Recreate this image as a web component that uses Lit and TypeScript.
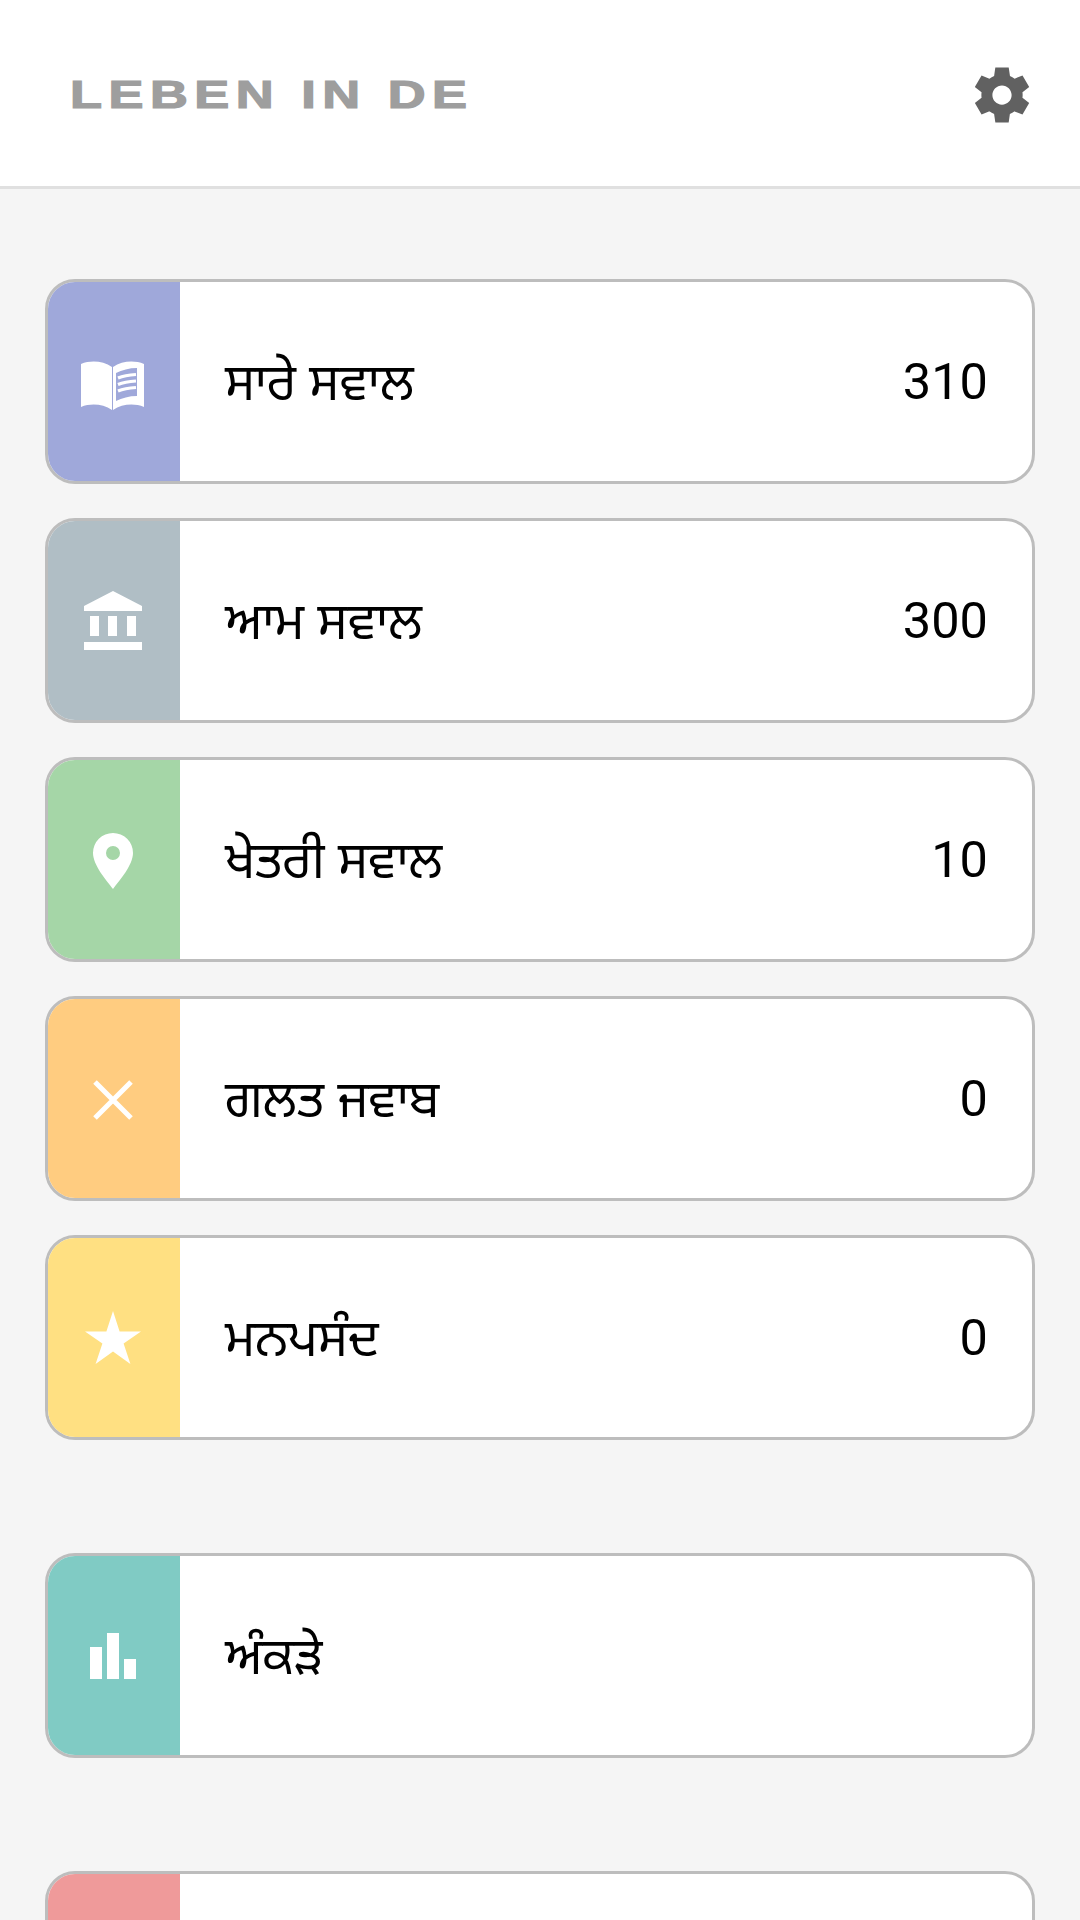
import { LitElement, html, css, svg } from "lit";
import { customElement } from "lit/decorators.js";

const W = "#fff";
const icons = {
  book: svg`<path fill="${W}" d="M3 18C13 14 25 15 34 21V64C25 58 13 57 3 61Z"/><path fill="${W}" fill-rule="evenodd" d="M35 21C44 15 56 14 66 18V61C56 57 44 58 35 64ZM38 27V55C44 52 51 50 59 50V22C51 22 44 24 38 27Z"/><path fill="none" stroke="${W}" stroke-width="3.2" d="M40 32C45 30 51 29 58 28.500M40 38.500C45 36.500 51 35.500 58 35M40 45C45 43 51 42 58 41.500"/>`,
  bank: svg`<path fill="${W}" d="M35 6L64 21V26H6V21ZM12 31H21V51H12ZM30 31H39V51H30ZM49 31H58V51H49ZM6 57H64V65H6Z"/>`,
  pin: svg`<path fill="${W}" fill-rule="evenodd" d="M35 9A20 20 0 0 1 55 29C55 41 42 56 35 65C28 56 15 41 15 29A20 20 0 0 1 35 9ZM35 22A7 7 0 1 0 35 36A7 7 0 1 0 35 22Z"/>`,
  x: svg`<path fill="none" stroke="${W}" stroke-width="5" d="M17 19L53 55M53 19L17 55"/>`,
  star: svg`<path fill="${W}" d="M35 9L41.6 29.500H63L45.600 41.600L52.400 62L35 49.600L17.600 62L24.400 41.600L7 29.500H28.400Z"/>`,
  bars: svg`<path fill="${W}" d="M12 27H24V59H12ZM29 13H41V59H29ZM46 39H58V59H46Z"/>`,
};

type Row = { key: keyof typeof icons | null; color: string; label: string; count?: string };

const main: Row[] = [
  { key: "book", color: "#9fa8da", label: "ਸਾਰੇ ਸਵਾਲ", count: "310" },
  { key: "bank", color: "#b0bec5", label: "ਆਮ ਸਵਾਲ", count: "300" },
  { key: "pin", color: "#a5d6a7", label: "ਖੇਤਰੀ ਸਵਾਲ", count: "10" },
  { key: "x", color: "#ffcc80", label: "ਗਲਤ ਜਵਾਬ", count: "0" },
  { key: "star", color: "#ffe082", label: "ਮਨਪਸੰਦ", count: "0" },
];

@customElement("app-root")
export class AppRoot extends LitElement {
  static styles = css`
    :host { display: block; width: 1080px; height: 1920px; overflow: hidden; background: #f5f5f5; font-family: Roboto, "Noto Sans", sans-serif; }
    .header { height: 186px; background: #fff; border-bottom: 3px solid #e0e0e0; display: flex; align-items: center; justify-content: space-between; padding: 0 45px 0 70px; }
    .logo { display: inline-block; font: bold 38px "Liberation Sans", Arial, sans-serif; letter-spacing: 4.7px; color: #9e9e9e; -webkit-text-stroke: 1.2px #9e9e9e; transform: scaleX(1.38); transform-origin: left center; white-space: nowrap; margin-top: 4px; }
    .gear { width: 66px; height: 66px; fill: #616161; display: block; margin-top: 4px; }
    .content { padding: 90px 45px 0; display: flex; flex-direction: column; }
    .group { display: flex; flex-direction: column; gap: 34px; margin-bottom: 113px; }
    .card { height: 205px; box-sizing: border-box; border: 3px solid #bdbdbd; border-radius: 30px; background: #fff; display: flex; align-items: center; overflow: hidden; }
    .strip { width: 132px; align-self: stretch; flex: none; display: flex; align-items: center; justify-content: center; }
    .strip svg { width: 72px; height: 72px; display: block; }
    .label { flex: 1; padding: 14px 0 0 45px; font-size: 50.500px; line-height: 1.2; color: #000; font-family: "Noto Sans Gurmukhi", "Noto Sans", "Liberation Sans", sans-serif; }
    .count { padding-right: 44px; font-size: 50.500px; color: #000; }
  `;

  private row(r: Row) {
    return html`<div class="card">
      <div class="strip" style="background:${r.color}">
        ${r.key ? html`<svg viewBox="0 0 72 72">${icons[r.key]}</svg>` : null}
      </div>
      <div class="label">${r.label}</div>
      ${r.count ? html`<div class="count">${r.count}</div>` : null}
    </div>`;
  }

  render() {
    return html`
      <div class="header">
        <span class="logo">LEBEN IN DE</span>
        <svg class="gear" viewBox="0 0 24 24"><path d="M19.44 12.99l-.01.02c.04-.33.08-.67.08-1.01 0-.34-.03-.66-.07-.99l.01.02 2.44-1.92-2.43-4.22-2.87 1.16.01.01c-.52-.4-1.09-.74-1.71-1h.01L14.44 2H9.57l-.44 3.07h.01c-.62.26-1.19.6-1.71 1l.01-.01-2.88-1.17-2.44 4.22 2.44 1.92.01-.02c-.04.33-.07.65-.07.99 0 .34.03.68.08 1.01l-.01-.02-2.1 1.65-.33.26 2.43 4.2 2.88-1.15-.02-.04c.53.41 1.1.75 1.73 1.01h-.03L9.58 22h4.85s.03-.18.06-.42l.38-2.65h-.01c.62-.26 1.2-.6 1.73-1.01l-.02.04 2.88 1.15 2.43-4.2s-.14-.12-.33-.26l-2.11-1.66zM12 15.5c-1.93 0-3.5-1.57-3.5-3.5s1.57-3.5 3.5-3.5 3.5 1.57 3.5 3.5-1.57 3.5-3.5 3.5z"/></svg>
      </div>
      <div class="content">
        <div class="group">${main.map((r) => this.row(r))}</div>
        <div class="group">${this.row({ key: "bars", color: "#80cbc4", label: "ਅੰਕੜੇ" })}</div>
        <div class="group">${this.row({ key: null, color: "#ef9a9a", label: "" })}</div>
      </div>
    `;
  }
}
